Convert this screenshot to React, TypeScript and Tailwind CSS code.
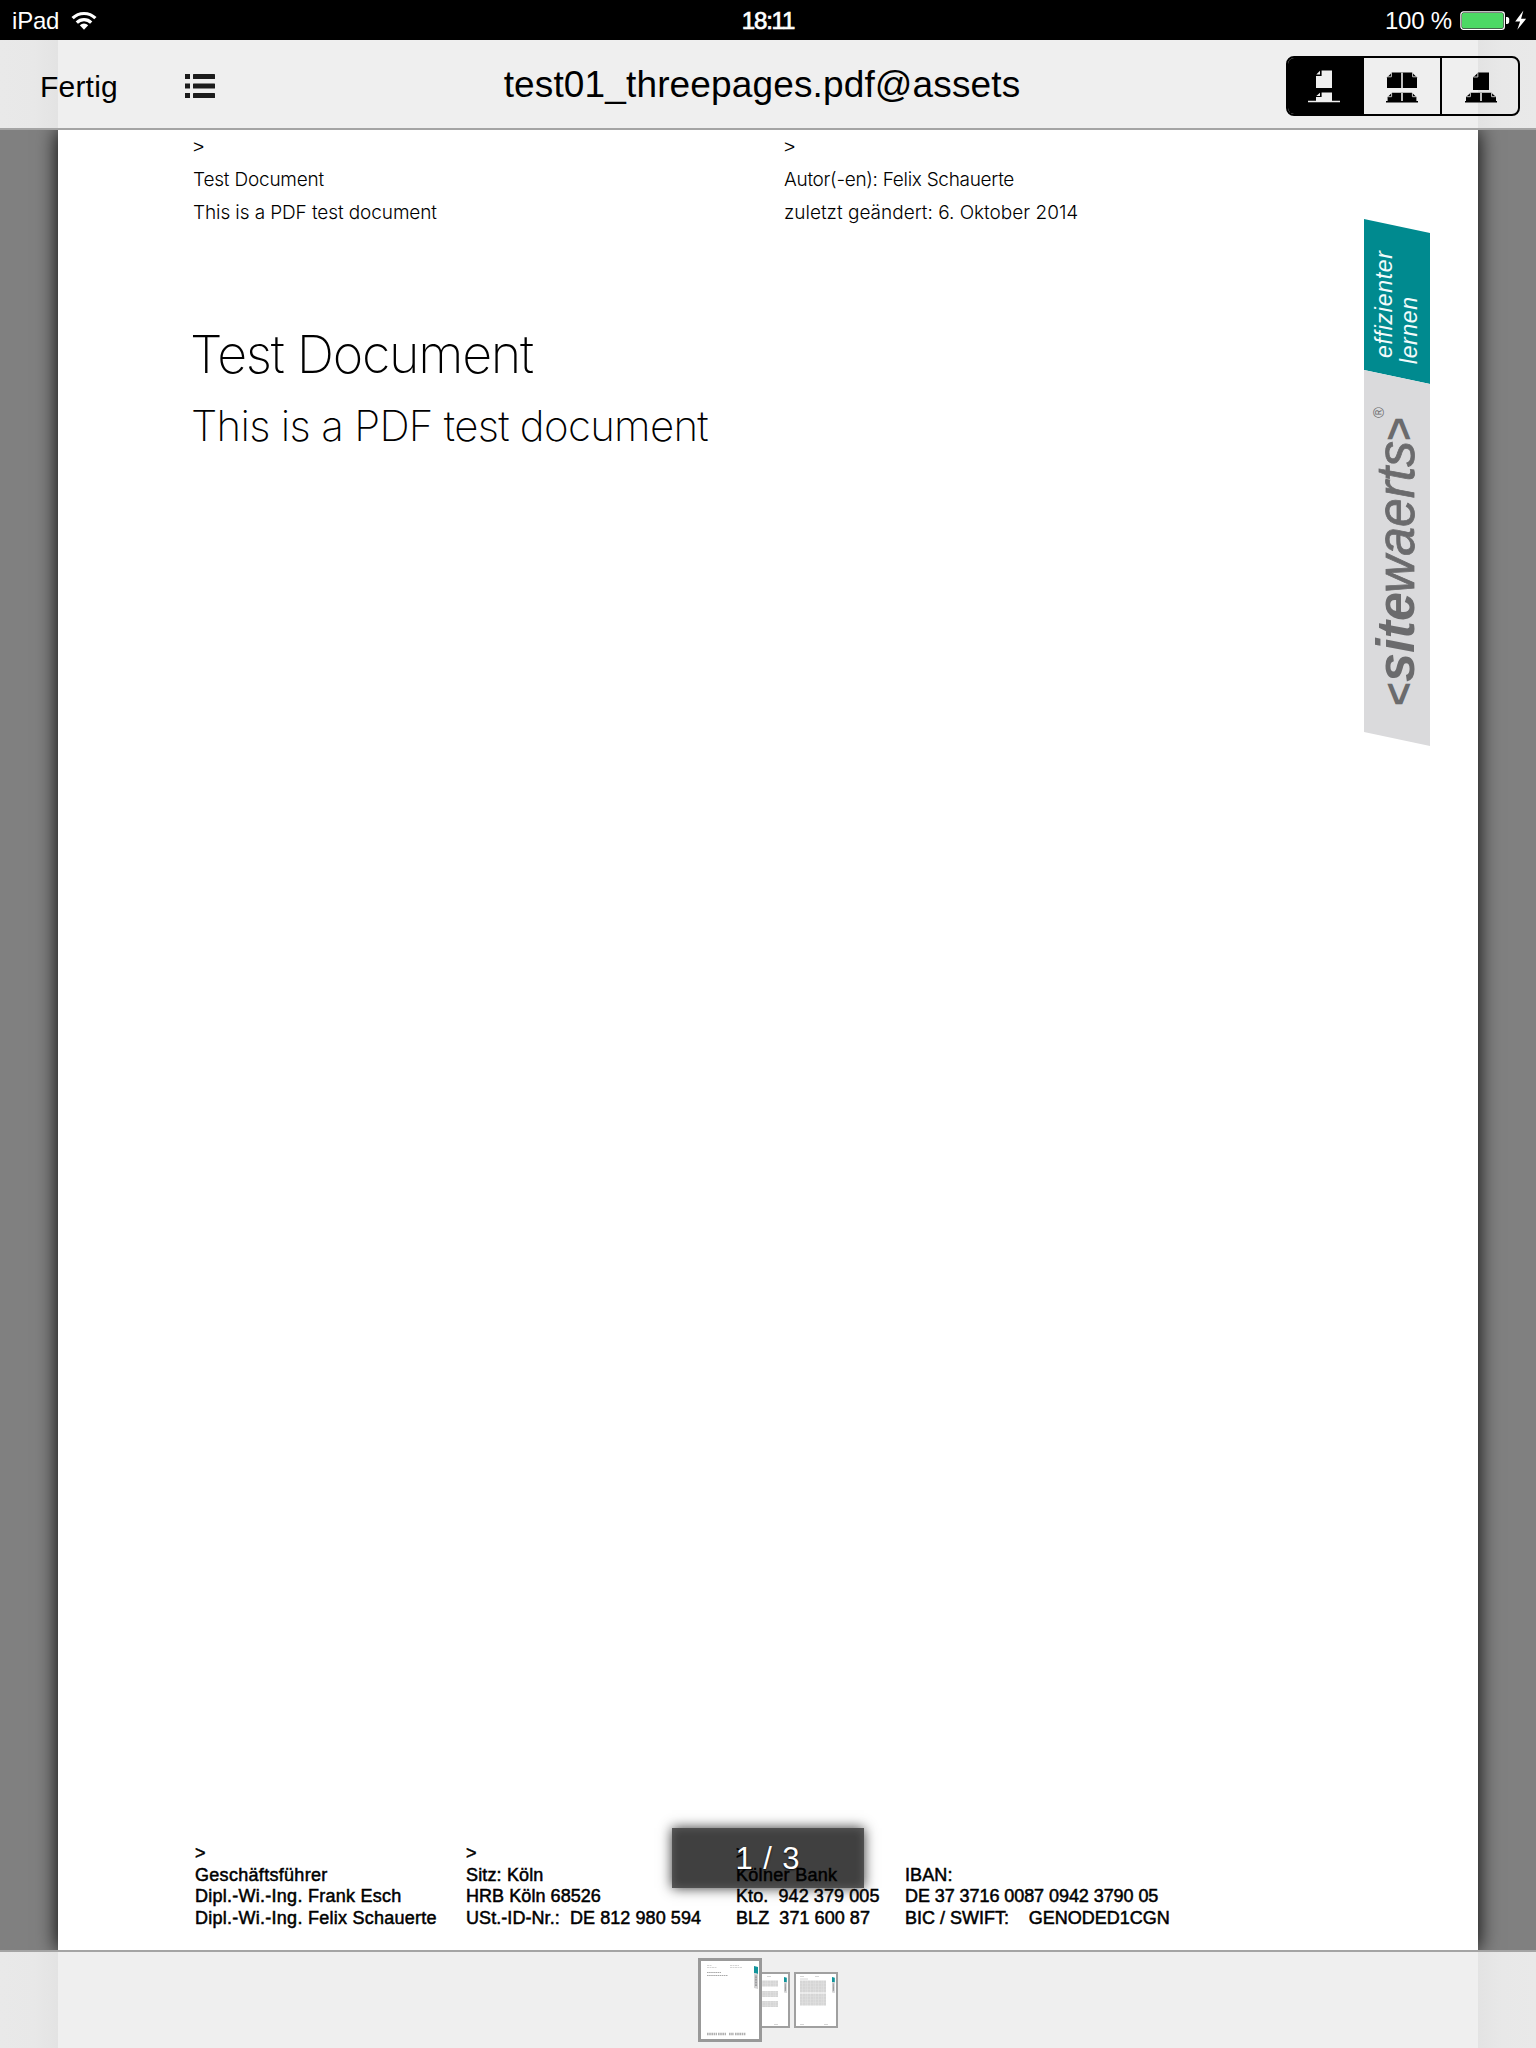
import type { ReactNode } from "react";

function WifiIcon() {
  return (
    <svg width="26" height="20" viewBox="0 0 26 20" fill="none" stroke="#fff" strokeWidth="3.2">
      <path d="M1.6 7.2a16.2 16.2 0 0 1 22.8 0" />
      <path d="M5.8 11.6a10.2 10.2 0 0 1 14.4 0" />
      <path d="M8.8 14.3a6 6 0 0 1 8.4 0L13 18.8z" fill="#fff" stroke="none" />
    </svg>
  );
}

function BatteryIcon() {
  return (
    <svg width="68" height="22" viewBox="0 0 68 22">
      <rect x="0.9" y="1.9" width="43.4" height="17.4" rx="2.6" fill="#000" stroke="#fff" strokeWidth="1.3" />
      <rect x="2" y="3" width="41.2" height="15.2" rx="1.4" fill="#4cd964" />
      <path d="M46 7h1.2c1.2 0 2 1 2 2.2v2.6c0 1.2-.8 2.2-2 2.2H46z" fill="#fff" />
      <path d="M63.4.6 55.2 11.6h4.9l-2.8 8.2 8.8-11h-5z" fill="#fff" />
    </svg>
  );
}

function StatusBar() {
  return (
    <header className="grid h-10 shrink-0 grid-cols-3 items-center bg-black text-2xl leading-10 text-white">
      <div className="flex items-center pl-3">
        <span className="pt-px tracking-[-0.2px]">iPad</span>
        <span className="ml-3">
          <WifiIcon />
        </span>
      </div>
      <div className="pt-px text-center tracking-[-1.2px] [-webkit-text-stroke:0.7px_#fff]">18:11</div>
      <div className="flex items-center justify-end pr-2">
        <span className="mr-2 pt-px tracking-[-0.2px]">100 %</span>
        <BatteryIcon />
      </div>
    </header>
  );
}

function ListIcon() {
  return (
    <svg width="30" height="24" viewBox="0 0 30 24" fill="#1c1c1c">
      {[0, 9.5, 19].map((y) => (
        <g key={y}>
          <rect x="0" y={y} width="5" height="5" />
          <rect x="8" y={y} width="22" height="5" rx="0.6" />
        </g>
      ))}
    </svg>
  );
}

function SinglePageIcon() {
  return (
    <svg width="32" height="34" viewBox="0 0 32 34" fill="#efefef">
      <path d="M13.6 1.500H24v17.400H8V7.100h5.600z" />
      <path d="M8.300 5.400 12 1.700v3.700z" />
      <path d="M13.600 23.500H24v8.500H8v-3.900h5.600z" />
      <path d="M8.300 27.100 12 23.700v3.400z" />
      <path d="M0 31.800h32v1.400H0z" />
    </svg>
  );
}

function DoublePageIcon() {
  return (
    <svg width="32" height="34" viewBox="0 0 32 34">
      <path d="M6 3.500h20l5 5v10.500H1V8.500z" fill="#000" />
      <path d="M1.600 32.500V28l4.400-4.300h20l4.400 4.300v4.500z" fill="#000" />
      <path d="M15 3.500h2v15.500h-2zM15 23.700h2v8.300h-2z" fill="#bdbdbd" />
      <path d="M5.400 3.800v4H1.400M26.600 3.800v4h4M5.600 24v3.700H1.800M26.400 24v3.700h3.800" fill="none" stroke="#c4c4c4" strokeWidth="1" />
      <path d="M0 32h32v1.500H0z" fill="#000" />
    </svg>
  );
}

function CoverPageIcon() {
  return (
    <svg width="32" height="34" viewBox="0 0 32 34">
      <path d="M13.200 3.500H24V21H8V8.500z" fill="#000" />
      <path d="M1 32.500V28l4.600-4.300h20.800L31 28v4.500z" fill="#000" />
      <path d="M15 23.700h2v8.300h-2z" fill="#bdbdbd" />
      <path d="M12.800 3.800V8H8.500M5.400 24v3.700H1.400M26.600 24v3.700h4" fill="none" stroke="#c4c4c4" strokeWidth="1" />
      <path d="M0 32h32v1.500H0z" fill="#000" />
    </svg>
  );
}

function NavBar() {
  return (
    <nav className="relative flex h-[90px] shrink-0 items-center border-b-2 border-[#a4a4a4] bg-[linear-gradient(90deg,#e9e9e9_0px,#e8e8e8_34px,#e3e3e3_58px,#efefef_58px,#efefef_1478px,#e3e3e3_1478px,#e8e8e8_1502px,#e9e9e9_1536px)]">
      <button className="ml-10 pt-[5px] text-[30px] leading-9 tracking-[0.2px] text-black">Fertig</button>
      <button className="mt-1 ml-[67px]">
        <ListIcon />
      </button>
      <h1 className="absolute inset-x-0 top-[23px] mr-[12px] text-center text-[37px] leading-[44px] tracking-[0.14px] text-black">
        test01_threepages.pdf@assets
      </h1>
      <div className="mt-1 mr-4 ml-auto flex h-[60px] w-[234px] overflow-hidden rounded-lg border-2 border-black">
        <button className="flex w-[76px] items-center justify-center bg-black pr-1">
          <SinglePageIcon />
        </button>
        <button className="flex w-[78px] items-center justify-center border-r-2 border-black">
          <DoublePageIcon />
        </button>
        <button className="flex w-[76px] items-center justify-center pl-0.5">
          <CoverPageIcon />
        </button>
      </div>
    </nav>
  );
}

function Logo() {
  return (
    <svg width="68" height="528" viewBox="0 0 68 528" fontFamily="'Liberation Sans', Arial, sans-serif">
      <path d="M1 0 67 14V165L1 151z" fill="#008a8f" />
      <path d="M1 151 67 165V527L1 513z" fill="#dadadc" />
      <g fontStyle="italic" fill="#f2fbfb" fontSize="23">
        <text transform="translate(29.3 139) rotate(-90)" textLength="107">effizienter</text>
        <text transform="translate(54 145) rotate(-90)" textLength="67">lernen</text>
      </g>
      <g fill="#6b6b6d" fontStyle="italic">
        <text transform="translate(50 487) rotate(-90)" fontSize="43" fontWeight="700" textLength="24" lengthAdjust="spacingAndGlyphs" fontStyle="normal">&lt;</text>
        <text transform="translate(50.5 463) rotate(-90)" fontSize="54.5" fontWeight="700" textLength="90" lengthAdjust="spacingAndGlyphs">site</text>
        <text transform="translate(50.5 374) rotate(-90)" fontSize="54.5" textLength="152" lengthAdjust="spacingAndGlyphs" stroke="#6b6b6d" strokeWidth="0.8">waerts</text>
        <text transform="translate(50 222) rotate(-90)" fontSize="43" fontWeight="700" textLength="24" lengthAdjust="spacingAndGlyphs" fontStyle="normal">&gt;</text>
        <text transform="translate(20.5 199) rotate(-90)" fontSize="15" fontStyle="normal">®</text>
      </g>
    </svg>
  );
}

function MetaColumn({ children }: { children: ReactNode }) {
  return <div className="w-[591px] whitespace-nowrap">{children}</div>;
}

function ImprintColumn({ className, lines }: { className: string; lines: { text: string; className?: string }[] }) {
  return (
    <div className={className}>
      {lines.map((line) => (
        <p key={line.text} className={line.className ?? "tracking-[0.2px]"}>
          {line.text || "\u00a0"}
        </p>
      ))}
    </div>
  );
}

function DocumentPage() {
  return (
    <article className="relative flex w-[1420px] flex-col bg-white text-black shadow-[0_0_20px_#000]">
      <div className="flex pl-[135px] font-[Inter] text-[19px] leading-[33px] font-light">
        <MetaColumn>
          <p className="font-['Liberation_Sans'] text-[19px] leading-[33px]">&gt;</p>
          <p className="tracking-[-0.2px]">Test Document</p>
          <p className="tracking-[-0.1px]">This is a PDF test document</p>
        </MetaColumn>
        <MetaColumn>
          <p className="font-['Liberation_Sans'] text-[19px] leading-[33px]">&gt;</p>
          <p className="tracking-[-0.3px]">Autor(-en): Felix Schauerte</p>
          <p className="tracking-[0px]">zuletzt geändert: 6. Oktober 2014</p>
        </MetaColumn>
      </div>
      <div className="mt-[93px] pl-[132px] font-[Inter] font-extralight">
        <h2 className="text-[52px] leading-[66px] tracking-[-1.3px]">Test Document</h2>
        <h3 className="mt-[10px] ml-px text-[42px] leading-[56px] tracking-[-0.7px]">This is a PDF test document</h3>
      </div>
      <div className="absolute top-[89px] left-[1305px]">
        <Logo />
      </div>
      <div className="mt-auto mb-[21px] flex pl-[137px] text-lg leading-[21.5px] whitespace-pre [-webkit-text-stroke:0.5px_#000]">
        <ImprintColumn
          className="w-[271px]"
          lines={[
            { text: ">" },
            { text: "Geschäftsführer", className: "tracking-[0.3px]" },
            { text: "Dipl.-Wi.-Ing. Frank Esch", className: "tracking-[0.26px]" },
            { text: "Dipl.-Wi.-Ing. Felix Schauerte", className: "tracking-[0.26px]" },
          ]}
        />
        <ImprintColumn
          className="w-[270px]"
          lines={[
            { text: ">" },
            { text: "Sitz: Köln", className: "tracking-[0.15px]" },
            { text: "HRB Köln 68526", className: "tracking-[0.06px]" },
            { text: "USt.-ID-Nr.:  DE 812 980 594", className: "tracking-[0.07px]" },
          ]}
        />
        <ImprintColumn
          className="w-[169px]"
          lines={[
            { text: ">" },
            { text: "Kölner Bank", className: "tracking-[0.3px]" },
            { text: "Kto.  942 379 005", className: "tracking-[0.08px]" },
            { text: "BLZ  371 600 87", className: "tracking-[0.06px]" },
          ]}
        />
        <ImprintColumn
          className="w-[300px]"
          lines={[
            { text: "" },
            { text: "IBAN:", className: "tracking-[0.1px]" },
            { text: "DE 37 3716 0087 0942 3790 05", className: "tracking-[-0.07px]" },
            { text: "BIC / SWIFT:    GENODED1CGN", className: "tracking-[-0.01px]" },
          ]}
        />
      </div>
      <div className="absolute top-[1698px] left-[614px] flex h-[60px] w-[192px] items-center justify-center bg-black/75 pt-0.5 text-[31px] tracking-[0.9px] text-white shadow-[0_0_12px_rgba(0,0,0,0.8),inset_0_0_10px_rgba(255,255,255,0.18)] [text-shadow:0_1px_2px_#000]">
        1 / 3
      </div>
    </article>
  );
}

function ThumbTag({ x, y, scale }: { x: number; y: number; scale: number }) {
  return (
    <g transform={`translate(${x} ${y}) scale(${scale})`}>
      <path d="M0 0 4 1V8L0 7z" fill="#12949b" />
      <path d="M0 7 4 8V23L0 22z" fill="#d2d2d3" />
      <path d="M2 9.500V20" stroke="#858587" strokeWidth="1.300" strokeDasharray="1.200 .4" />
    </g>
  );
}

function TextBlock({ x, y, width, rows }: { x: number; y: number; width: number; rows: number }) {
  return (
    <g>
      <rect x={x} y={y} width={width} height={rows * 1.5} fill="#e4e4e4" />
      {Array.from({ length: rows }, (_, i) => (
        <path key={i} d={`M${x} ${y + 0.75 + i * 1.5}h${width}`} stroke="#c9c9c9" strokeWidth="0.7" strokeDasharray="2 .6 3 .5 1.4 .5" />
      ))}
    </g>
  );
}

function ThumbnailBar() {
  return (
    <footer className="flex h-[98px] shrink-0 items-start border-t-2 border-[#a4a4a4] bg-[linear-gradient(90deg,#e9e9e9_0px,#e8e8e8_34px,#e3e3e3_58px,#efefef_58px,#efefef_1478px,#e3e3e3_1478px,#e8e8e8_1502px,#e9e9e9_1536px)] pl-[698px]">
      <div className="z-10 mt-1.5 h-[84px] w-16 border-3 border-[#999] bg-white">
        <svg width="58" height="78" viewBox="0 0 58 78">
          <path d="M6 4.500h5M6 6.500h10M29 4.500h9M29 6.500h12" stroke="#ccc" strokeWidth="0.8" strokeDasharray="2 .5" />
          <path d="M6 11.500h14M6 14.500h21" stroke="#aaa" strokeWidth="1" strokeDasharray="1.600 .5" />
          <path d="M6 73h10M17 73h8M28 73h5M34 73h11" stroke="#b0b0b0" strokeWidth="2.400" strokeDasharray="1.600 .6" />
          <ThumbTag x={53} y={5} scale={1} />
        </svg>
      </div>
      <div className="-ml-4 mt-5 h-14 w-11 border-2 border-[#a0a0a0] bg-white">
        <svg width="40" height="52" viewBox="0 0 40 52">
          <path d="M19 2.500h4M26 50.500h4" stroke="#ccc" strokeWidth="0.8" />
          <TextBlock x={4} y={6.5} width={26} rows={4} />
          <TextBlock x={4} y={17} width={26} rows={4} />
          <TextBlock x={4} y={27} width={26} rows={4} />
          <ThumbTag x={36} y={3} scale={0.7} />
        </svg>
      </div>
      <div className="mt-5 ml-1 h-14 w-11 border-2 border-[#a0a0a0] bg-white">
        <svg width="40" height="52" viewBox="0 0 40 52">
          <path d="M4 2.500h4M19 2.500h4M4 5h8M4 50.500h4M28 50.500h4" stroke="#ccc" strokeWidth="0.8" />
          <TextBlock x={4} y={6.5} width={26} rows={8} />
          <TextBlock x={4} y={19.5} width={26} rows={8} />
          <ThumbTag x={36} y={3} scale={0.7} />
        </svg>
      </div>
    </footer>
  );
}

export default function App() {
  return (
    <div className="flex h-[2048px] w-[1536px] flex-col overflow-hidden bg-[#808080] font-['Liberation_Sans',Arial,sans-serif]">
      <StatusBar />
      <NavBar />
      <main className="flex h-[1820px] shrink-0 justify-center overflow-hidden">
        <DocumentPage />
      </main>
      <ThumbnailBar />
    </div>
  );
}
